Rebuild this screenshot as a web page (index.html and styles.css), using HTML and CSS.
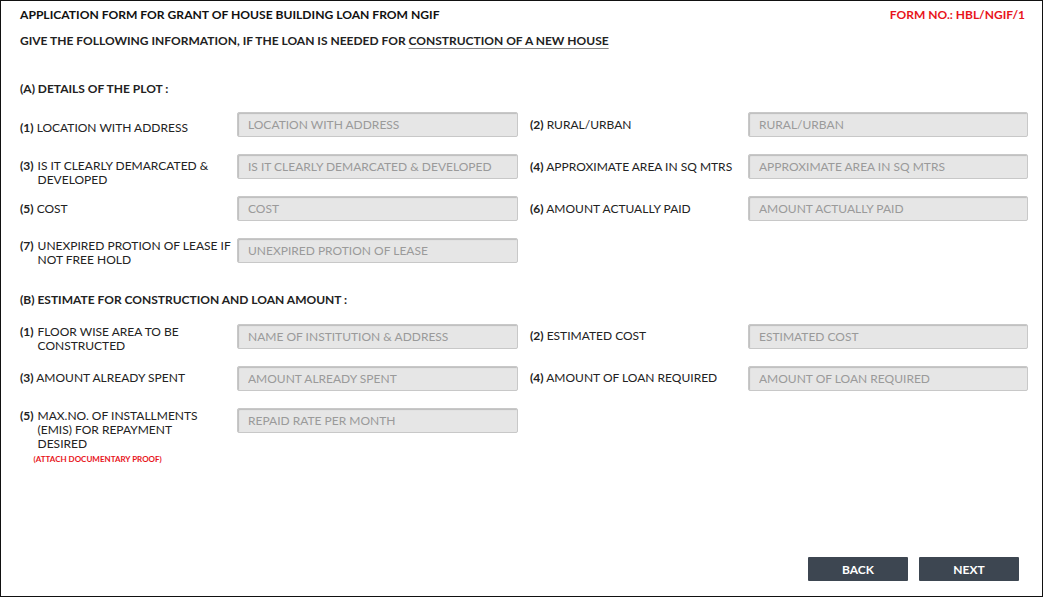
FILE: index.html
```html
<!DOCTYPE html>
<html>
<head>
<meta charset="utf-8">
<link rel="stylesheet" href="styles.css">
</head>
<body>
<div class="page">
  <header class="top">
    <div class="title-row">
      <h1 class="title">APPLICATION FORM FOR GRANT OF HOUSE BUILDING LOAN FROM NGIF</h1>
      <div class="form-no">FORM NO.: HBL/NGIF/1</div>
    </div>
    <p class="subtitle">GIVE THE FOLLOWING INFORMATION, IF THE LOAN IS NEEDED FOR <span class="ul">CONSTRUCTION OF A NEW HOUSE</span></p>
  </header>

  <section class="section sec-a">
    <h2 class="sec-head">(A) DETAILS OF THE PLOT :</h2>
    <div class="grid">
      <div class="field">
        <label class="lbl low"><b>(1)</b> LOCATION WITH ADDRESS</label>
        <input class="inp" placeholder="LOCATION WITH ADDRESS">
      </div>
      <div class="field right">
        <label class="lbl"><b>(2)</b> RURAL/URBAN</label>
        <input class="inp" placeholder="RURAL/URBAN">
      </div>
      <div class="field">
        <label class="lbl multi two"><b>(3)</b> <span>IS IT CLEARLY DEMARCATED &amp; DEVELOPED</span></label>
        <input class="inp" placeholder="IS IT CLEARLY DEMARCATED &amp; DEVELOPED">
      </div>
      <div class="field right">
        <label class="lbl"><b>(4)</b> APPROXIMATE AREA IN SQ MTRS</label>
        <input class="inp" placeholder="APPROXIMATE AREA IN SQ MTRS">
      </div>
      <div class="field">
        <label class="lbl"><b>(5)</b> COST</label>
        <input class="inp" placeholder="COST">
      </div>
      <div class="field right">
        <label class="lbl"><b>(6)</b> AMOUNT ACTUALLY PAID</label>
        <input class="inp" placeholder="AMOUNT ACTUALLY PAID">
      </div>
      <div class="field">
        <label class="lbl multi"><b>(7)</b> <span>UNEXPIRED PROTION OF LEASE IF NOT FREE HOLD</span></label>
        <input class="inp" placeholder="UNEXPIRED PROTION OF LEASE">
      </div>
    </div>
  </section>

  <section class="section sec-b">
    <h2 class="sec-head">(B) ESTIMATE FOR CONSTRUCTION AND LOAN AMOUNT :</h2>
    <div class="grid">
      <div class="field">
        <label class="lbl multi"><b>(1)</b> <span>FLOOR WISE AREA TO BE CONSTRUCTED</span></label>
        <input class="inp" placeholder="NAME OF INSTITUTION &amp; ADDRESS">
      </div>
      <div class="field right">
        <label class="lbl"><b>(2)</b> ESTIMATED COST</label>
        <input class="inp" placeholder="ESTIMATED COST">
      </div>
      <div class="field">
        <label class="lbl"><b>(3)</b> AMOUNT ALREADY SPENT</label>
        <input class="inp" placeholder="AMOUNT ALREADY SPENT">
      </div>
      <div class="field right">
        <label class="lbl"><b>(4)</b> AMOUNT OF LOAN REQUIRED</label>
        <input class="inp" placeholder="AMOUNT OF LOAN REQUIRED">
      </div>
      <div class="field">
        <label class="lbl multi narrow"><b>(5)</b> <span>MAX.NO. OF INSTALLMENTS (EMIS) FOR REPAYMENT DESIRED<small class="proof">(ATTACH DOCUMENTARY PROOF)</small></span></label>
        <input class="inp" placeholder="REPAID RATE PER MONTH">
      </div>
    </div>
  </section>

  <div class="actions">
    <button class="btn">BACK</button>
    <button class="btn">NEXT</button>
  </div>
</div>
</body>
</html>
```

FILE: styles.css
```css
* { box-sizing: border-box; }
html, body { margin: 0; padding: 0; background: #fff; }
body {
  font-family: Lato, "Open Sans", sans-serif;
  color: #222;
  font-size: 12px;
}
.page {
  width: 1043px;
  height: 597px;
  border: 1px solid #111;
  padding: 0 16px 0 19px;
  display: flex;
  flex-direction: column;
}
.top { padding-top: 6px; }
.title-row {
  display: flex;
  justify-content: space-between;
  align-items: center;
}
.title {
  margin: 0;
  font-size: 12.1px;
  font-weight: 700;
  color: #111;
  line-height: 16px;
}
.form-no {
  color: #e8141b;
  font-weight: 700;
  font-size: 12px;
  line-height: 16px;
  margin-right: 1px;
}
.subtitle {
  margin: 10px 0 0;
  font-size: 12px;
  font-weight: 700;
  color: #222;
  line-height: 16px;
}
.ul {
  text-decoration: underline;
  text-decoration-color: #888;
  text-underline-offset: 3px;
}
.sec-head {
  margin: 0;
  font-size: 12px;
  font-weight: 700;
  color: #222;
  line-height: 16px;
}
.sec-a { margin-top: 32px; }
.sec-a .sec-head { margin-bottom: 15px; }
.sec-b { margin-top: 29px; }
.sec-b .sec-head { margin-bottom: 16px; }
.grid {
  display: grid;
  grid-template-columns: 498px 498px;
  grid-auto-rows: 25px;
  column-gap: 12px;
  row-gap: 17px;
}
.field {
  display: flex;
  align-items: flex-start;
  min-height: 0;
}
.lbl {
  width: 217px;
  flex: none;
  font-size: 12px;
  line-height: 14px;
  color: #222;
  padding-top: 6px;
}
.sec-b .lbl { padding-top: 5px; }
.right .lbl { width: 218px; }
.lbl b { font-weight: 700; }
.lbl.low { padding-top: 9px; }
.lbl.multi {
  display: flex;
  gap: 4px;
  padding-top: 1px;
}
.lbl.multi.two { padding-top: 5px; }
.lbl.multi.narrow { padding-right: 20px; padding-top: 1px; }
.lbl.multi span { display: block; }
.proof {
  display: block;
  color: #e8141b;
  font-size: 8px;
  font-weight: 700;
  line-height: 10px;
  margin-top: 3px;
  margin-left: -4px;
}
.inp {
  flex: 1;
  height: 25px;
  margin: 0;
  border: 1px solid #c8c8c8;
  border-radius: 2px;
  background: #e6e6e6;
  box-shadow: inset 1px 1px 1px rgba(0,0,0,0.18);
  padding: 0 10px;
  font-family: inherit;
  font-size: 12px;
  color: #333;
  outline: none;
}
.inp::placeholder { color: #9a9a9a; opacity: 1; }
.actions {
  margin-top: auto;
  margin-bottom: 15px;
  display: flex;
  justify-content: flex-end;
  gap: 11px;
  padding-right: 7px;
}
.btn {
  width: 100px;
  height: 24px;
  border: none;
  border-radius: 1px;
  background: #3d4651;
  color: #fff;
  font-family: inherit;
  font-weight: 700;
  font-size: 12px;
  cursor: pointer;
}
```
